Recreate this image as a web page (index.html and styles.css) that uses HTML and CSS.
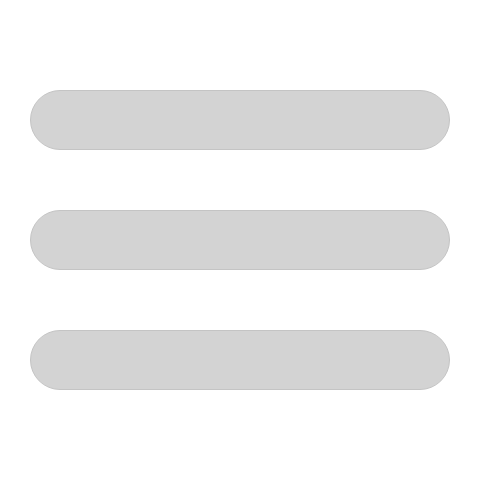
FILE: index.html
```html
<!DOCTYPE html>
<html lang="en">
<head>
    <meta charset="UTF-8">
    <meta name="viewport" content="width=device-width, initial-scale=1.0">
    <title>Menu</title>
    <link rel="stylesheet" href="styles.css">
</head>
<body>

    <div class="menu-icon">
        <div class="bar"></div>
        <div class="bar"></div>
        <div class="bar"></div>
    </div>

</body>
</html>
```

FILE: styles.css
```css
body {
    margin: 0;
    background-color: #ffffff;
}

.menu-icon {
    display: flex;
    flex-direction: column;
    gap: 60px;
    padding: 90px 30px 0 30px;
}

.bar {
    height: 60px;
    background-color: #d3d3d3;
    border: 1px solid #c4c4c4;
    border-radius: 30px;
    box-sizing: border-box;
}
```
